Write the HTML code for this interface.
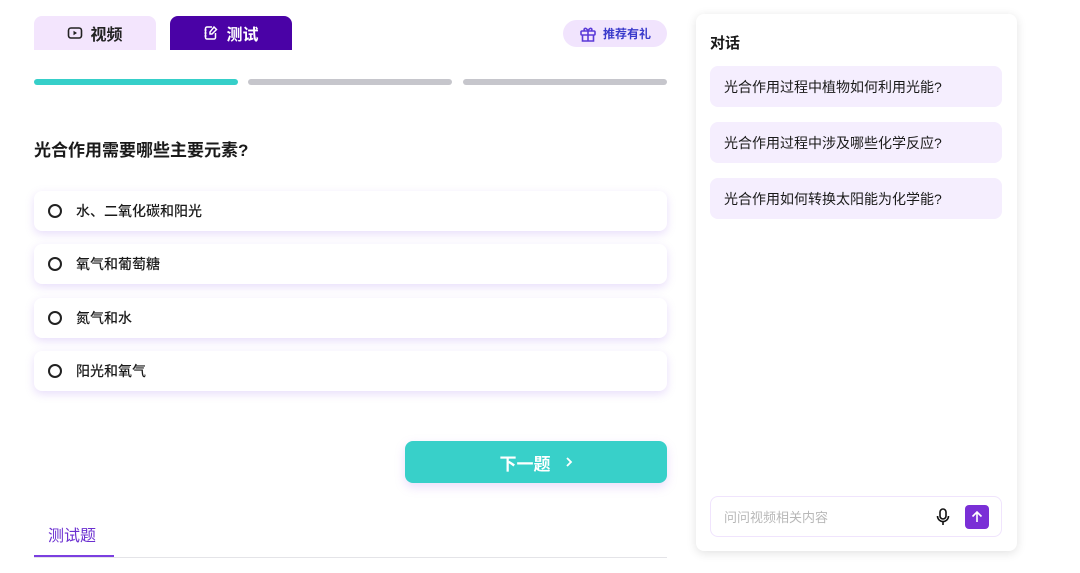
<!DOCTYPE html><html><head><meta charset="utf-8"><style>
*{margin:0;padding:0;box-sizing:border-box}
body{width:1080px;height:573px;background:#fff;font-family:"Liberation Sans","Noto Sans CJK SC",sans-serif;position:relative;overflow:hidden;color:#1a1a1a}
.a{position:absolute}
.tab{top:16px;height:34px;width:122px;border-radius:8px 8px 0 0;display:flex;align-items:center;justify-content:center;font-size:16px;font-weight:600;gap:7px}
.bar{top:79px;height:6px;border-radius:3px;width:204px;background:#c6c6cc}
.opt{left:34px;width:633px;height:40px;border-radius:8px;background:#fff;box-shadow:0 3px 9px rgba(150,100,230,.22);display:flex;align-items:center;padding-left:14px;font-size:14px;font-weight:500}
.opt i{width:14px;height:14px;border:2px solid #222;border-radius:50%;margin-right:14px}
.chip{left:710px;width:292px;height:41px;border-radius:8px;background:#f5eefe;font-size:14px;display:flex;align-items:center;padding-left:14px}
</style></head><body>
<div class="a tab" style="left:34px;background:#f3e5fd;color:#222">
<svg width="16" height="14" viewBox="0 0 16 14"><rect x="1.5" y="2" width="13" height="10" rx="2.5" fill="none" stroke="#222" stroke-width="1.6"/><path d="M6.5 4.8v4.4L10 7z" fill="#222"/></svg>视频</div>
<div class="a tab" style="left:170px;background:#4a02a6;color:#fff">
<svg width="16" height="16" viewBox="0 0 16 16" fill="none" stroke="#fff" stroke-width="1.5"><path d="M9 2H4a1.5 1.5 0 0 0-1.5 1.5v9A1.5 1.5 0 0 0 4 14h7a1.5 1.5 0 0 0 1.5-1.5V8"/><path d="M11 2l2.5 2.5L9 9H7V7z"/><path d="M1.5 5h2M1.5 8h2M1.5 11h2"/></svg>测试</div>
<div class="a" style="left:563px;top:20px;width:104px;height:27px;border-radius:14px;background:#f1e4fd;display:flex;align-items:center;justify-content:center;gap:6px;font-size:12px;font-weight:bold;color:#3a3acb">
<svg width="18" height="18" viewBox="0 0 18 18" fill="none" stroke="#5a3ad8" stroke-width="1.6"><rect x="2" y="6" width="14" height="4" rx="1"/><path d="M3.5 10v6h11v-6M9 6v10"/><path d="M9 6C7 2 4 3 5.5 6M9 6c2-4 5-3 3.5 0"/></svg>推荐有礼</div>
<div class="a bar" style="left:34px;width:204px;background:#36cfc9"></div>
<div class="a bar" style="left:248px"></div>
<div class="a bar" style="left:463px"></div>
<div class="a" style="left:34px;top:136px;font-size:17px;font-weight:bold">光合作用需要哪些主要元素?</div>
<div class="a opt" style="top:191px"><i></i>水、二氧化碳和阳光</div>
<div class="a opt" style="top:244px"><i></i>氧气和葡萄糖</div>
<div class="a opt" style="top:298px"><i></i>氮气和水</div>
<div class="a opt" style="top:351px"><i></i>阳光和氧气</div>
<div class="a" style="left:405px;top:441px;width:262px;height:42px;border-radius:8px;background:#38d0c9;box-shadow:0 4px 10px rgba(170,120,240,.25);color:#fff;font-size:17px;font-weight:bold;display:flex;align-items:center;justify-content:center;gap:14px">下一题 <svg width="8" height="12" viewBox="0 0 8 12" fill="none" stroke="#fff" stroke-width="1.8"><path d="M2 2l4 4-4 4"/></svg></div>
<div class="a" style="left:48px;top:522px;font-size:16px;color:#6b2fd0">测试题</div>
<div class="a" style="left:34px;top:557px;width:633px;height:1px;background:#e4e4e8"></div>
<div class="a" style="left:34px;top:555px;width:80px;height:2px;background:#7b3fe0"></div>
<div class="a" style="left:696px;top:14px;width:321px;height:537px;border-radius:8px;background:#fff;box-shadow:0 2px 10px rgba(0,0,0,.12)"></div>
<div class="a" style="left:710px;top:32px;font-size:15px;font-weight:bold">对话</div>
<div class="a chip" style="top:66px">光合作用过程中植物如何利用光能?</div>
<div class="a chip" style="top:122px">光合作用过程中涉及哪些化学反应?</div>
<div class="a chip" style="top:178px">光合作用如何转换太阳能为化学能?</div>
<div class="a" style="left:710px;top:496px;width:292px;height:41px;border-radius:8px;border:1px solid #f0e4fd;display:flex;align-items:center;padding-left:13px;font-size:13px;color:#b8b8b8">问问视频相关内容</div>
<svg class="a" style="left:936px;top:508px" width="14" height="18" viewBox="0 0 14 18" fill="none" stroke="#111" stroke-width="1.6"><rect x="4" y="1" width="6" height="10" rx="3"/><path d="M1.5 8a5.5 5.5 0 0 0 11 0M7 13.5V17"/></svg>
<div class="a" style="left:965px;top:505px;width:24px;height:24px;border-radius:4px;background:#7a2fd6"><svg width="24" height="24" viewBox="0 0 24 24" fill="none" stroke="#fff" stroke-width="1.6"><path d="M12 17V7M7.5 11.5L12 7l4.5 4.5"/></svg></div>
</body></html>
